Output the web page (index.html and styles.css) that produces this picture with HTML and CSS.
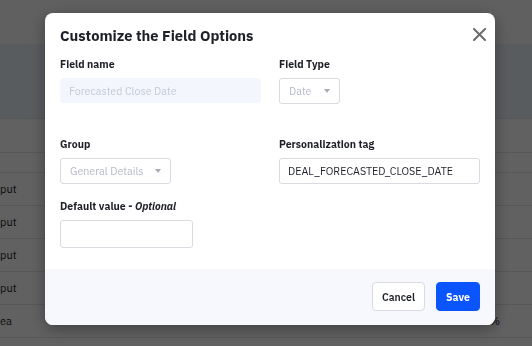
FILE: index.html
```html
<!DOCTYPE html>
<html>

<head>
    <title>Customize the Field Options</title>
    <link rel="stylesheet" href="styles.css">
</head>

<body>
    <div class="page">
        <div class="topbar"></div>
        <div class="banner"></div>
        <div class="row row-head"></div>
        <div class="row row-short"></div>
        <div class="row"><span class="cell">put</span><span class="cell-end"></span></div>
        <div class="row"><span class="cell">put</span><span class="cell-end"></span></div>
        <div class="row"><span class="cell">put</span><span class="cell-end"></span></div>
        <div class="row"><span class="cell">put</span><span class="cell-end"></span></div>
        <div class="row"><span class="cell">ea</span><span class="cell-end">%</span></div>
    </div>

    <div class="overlay">
        <div class="modal">
            <div class="modal-body">
                <h1 class="modal-title">Customize the Field Options</h1>
                <span class="close">
                    <svg width="13" height="13" viewBox="0 0 13 13">
                        <path d="M1 1 L12 12 M12 1 L1 12" stroke="#6b6b6b" stroke-width="2" stroke-linecap="round" />
                    </svg>
                </span>

                <div class="grid">
                    <div class="field">
                        <label class="label">Field name</label>
                        <div class="input input-disabled">Forecasted Close Date</div>
                    </div>
                    <div class="field">
                        <label class="label">Field Type</label>
                        <div class="select select-type">Date <span class="caret"></span></div>
                    </div>

                    <div class="field field-gap">
                        <label class="label">Group</label>
                        <div class="select select-group">General Details <span class="caret"></span></div>
                    </div>
                    <div class="field field-gap">
                        <label class="label">Personalization tag</label>
                        <div class="input input-text">DEAL_FORECASTED_CLOSE_DATE</div>
                    </div>

                    <div class="field">
                        <label class="label">Default value - <em>Optional</em></label>
                        <div class="input input-default"></div>
                    </div>
                </div>
            </div>

            <div class="modal-footer">
                <button class="btn btn-cancel">Cancel</button>
                <button class="btn btn-save">Save</button>
            </div>
        </div>
    </div>
</body>

</html>
```

FILE: styles.css
```css
body {
    margin: 0;
    font-family: "IBM Plex Sans", Inter, "Noto Sans", sans-serif;
    background: #fff;
    color: #1f2129;
}

/* page behind the dialog */
.page {
    width: 532px;
    height: 346px;
    overflow: hidden;
}

.topbar {
    height: 44px;
    background: #fdfdfd;
}

.banner {
    height: 74px;
    background: #ebf1f8;
    border-bottom: 1px solid #dfe3e8;
}

.row {
    display: flex;
    justify-content: space-between;
    align-items: center;
    height: 32px;
    border-bottom: 1px solid #e3e5ea;
    padding: 0 32px 0 0;
    font-size: 11px;
    color: #1f2129;
}

.row-head {
    height: 33px;
}

.row-short {
    height: 19px;
}

.overlay {
    position: fixed;
    top: 0;
    left: 0;
    right: 0;
    bottom: 0;
    background: rgba(0, 0, 0, 0.62);
    padding: 13px 0 0 45px;
}

.modal {
    position: relative;
    width: 450px;
    background: #fff;
    border-radius: 8px;
    overflow: hidden;
    box-shadow: 0 4px 16px rgba(0, 0, 0, 0.35);
}

.modal-body {
    padding: 13px 15px 21px 15px;
}

.modal-title {
    margin: 0;
    font-size: 14.7px;
    line-height: 20px;
    font-weight: 700;
    color: #1f2129;
}

.close {
    position: absolute;
    top: 15px;
    right: 9px;
    width: 13px;
    height: 13px;
    display: block;
}

.close svg {
    display: block;
}

.grid {
    display: grid;
    grid-template-columns: 201px 201px;
    column-gap: 18px;
    margin-top: 11px;
}

.field {
    display: flex;
    flex-direction: column;
    align-items: flex-start;
}

.field-gap {
    margin-top: 33px;
    margin-bottom: 15px;
}

.label {
    font-size: 10.5px;
    line-height: 14px;
    font-weight: 700;
    color: #1f2129;
    margin-bottom: 7px;
}

.label em {
    font-weight: 700;
}

.input,
.select {
    box-sizing: border-box;
    height: 26px;
    font-size: 10.7px;
    line-height: 24px;
    border: 1px solid #d9dbe1;
    border-radius: 3px;
    padding: 0 8px;
    white-space: nowrap;
}

.input-disabled {
    width: 201px;
    height: 25px;
    background: #f4f6fd;
    border-color: #f4f6fd;
    color: #c5c9d6;
}

.input-text {
    width: 201px;
    color: #1f2129;
}

.input-default {
    width: 133px;
    height: 28px;
}

.select {
    display: flex;
    align-items: center;
    justify-content: space-between;
    color: #b7bac3;
    padding: 0 9px;
}

.select-type {
    width: 61px;
}

.select-group {
    width: 111px;
}

.caret {
    width: 0;
    height: 0;
    border-left: 3.5px solid transparent;
    border-right: 3.5px solid transparent;
    border-top: 4px solid #a9acb5;
}

.modal-footer {
    display: flex;
    justify-content: flex-end;
    gap: 11px;
    background: #f7f8fd;
    padding: 13px 15px 14px 15px;
}

.btn {
    font-family: inherit;
    font-size: 10.5px;
    height: 29px;
    border-radius: 4px;
    cursor: pointer;
}

.btn-cancel {
    width: 53px;
    background: #fff;
    border: 1px solid #d9dbe1;
    color: #1f2129;
    font-weight: 600;
}

.btn-save {
    width: 44px;
    background: #0b55ff;
    border: 1px solid #0b55ff;
    color: #fff;
    font-weight: 700;
}
```
